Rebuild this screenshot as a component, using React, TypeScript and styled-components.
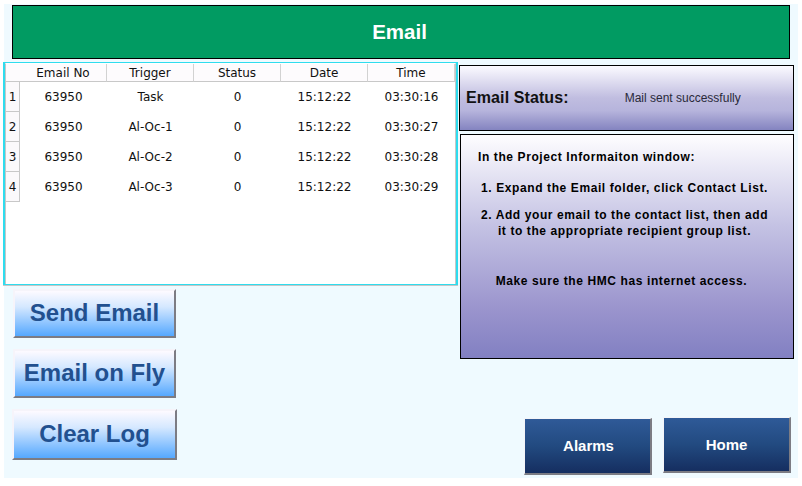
import React from 'react';
import styled, { createGlobalStyle } from 'styled-components';

const GlobalStyle = createGlobalStyle`
  html, body {
    margin: 0;
    padding: 0;
    background: #ffffff;
  }
`;

const Screen = styled.div`
  box-sizing: border-box;
  width: 794px;
  height: 474px;
  margin: 4px 0 0 4px;
  background: #effaff;
  display: flex;
  flex-direction: column;
`;

const TitleBar = styled.div`
  box-sizing: border-box;
  width: 778px;
  height: 54px;
  margin: 1px 0 0 8px;
  padding: 0 3px 1px 0;
  background: #019b62;
  border: 1px solid #000000;
  color: #ffffff;
  font: bold 20.5px 'Liberation Sans', Arial, sans-serif;
  display: flex;
  align-items: center;
  justify-content: center;
`;

const Body = styled.div`
  display: flex;
  margin-top: 3px;
  flex: 1;
`;

const LeftColumn = styled.div`
  width: 455px;
  margin-left: -1px;
  display: flex;
  flex-direction: column;
`;

const TableFrame = styled.div`
  box-sizing: border-box;
  width: 455px;
  height: 223px;
  background: #ffffff;
  border: 1px solid #2fdcee;
  border-left-width: 2px;
  border-right-width: 2px;
  box-shadow: 0 1px 0 #c6c6c6;
`;

const TableInner = styled.div`
  box-sizing: border-box;
  height: 100%;
  border: 1px solid #c6c6c6;
  border-top: 1px solid #ffffff;
  border-bottom: none;
  font: 12px 'DejaVu Sans', sans-serif;
  color: #111111;
`;

const TableGrid = styled.div`
  display: grid;
  grid-template-columns: 14px 87px 87px 87px 87px 87px;
`;

const HeadCell = styled.div`
  box-sizing: border-box;
  height: 18px;
  background: #fdfbfd;
  border-right: 1px solid #d2d2d2;
  border-bottom: 1px solid #c8c8c8;
  display: flex;
  align-items: center;
  justify-content: center;
  &:first-child {
    border-right: none;
  }
`;

const RowHead = styled.div`
  box-sizing: border-box;
  height: 30px;
  background: #fbf9fb;
  border-right: 1px solid #c8c8c8;
  border-bottom: 1px solid #c8c8c8;
  display: flex;
  align-items: center;
  justify-content: center;
`;

const Cell = styled.div`
  height: 30px;
  display: flex;
  align-items: center;
  justify-content: center;
`;

const ActionList = styled.div`
  display: flex;
  flex-direction: column;
  gap: 11px;
  margin: 4px 0 0 10px;
`;

const ActionButton = styled.button<{ $wide?: boolean }>`
  box-sizing: border-box;
  width: ${(p) => (p.$wide ? 165 : 163)}px;
  height: ${(p) => (p.$wide ? 51 : 49)}px;
  margin-left: ${(p) => (p.$wide ? -1 : 0)}px;
  padding: 0 0 2px;
  background: linear-gradient(#fdfaff 0%, #d5e8ff 35%, #55a8ff 100%);
  border: 2px solid #f6f4fa;
  border-right-color: #7c7c84;
  border-bottom-color: #7c7c84;
  color: #22508f;
  font: bold 24px 'Liberation Sans', Arial, sans-serif;
`;

const RightColumn = styled.div`
  width: 335px;
  margin-left: 1px;
  margin-top: 3px;
  display: flex;
  flex-direction: column;
`;

const StatusPanel = styled.div`
  box-sizing: border-box;
  height: 66px;
  background: linear-gradient(#fbfaff 0%, #c0bde0 50%, #b6b4dc 70%, #8484c0 100%);
  border: 1px solid #000000;
  display: flex;
  align-items: center;
  padding: 0 0 1px 6px;
  font-family: 'Liberation Sans', Arial, sans-serif;
  color: #111111;
`;

const StatusLabel = styled.span`
  font-weight: bold;
  font-size: 16px;
  letter-spacing: 0.1px;
`;

const StatusValue = styled.span`
  margin-left: 56px;
  font-size: 12px;
  color: #2a2a3a;
`;

const InfoPanel = styled.div`
  box-sizing: border-box;
  height: 225px;
  width: 334px;
  margin: 3px 0 0 1px;
  background: linear-gradient(#fefdff 0%, #c5c3e4 40%, #9a94cd 78%, #8280c2 100%);
  border: 1px solid #000000;
  padding: 14px 5px 0 0;
  font: bold 12px/16px 'Liberation Sans', Arial, sans-serif;
  letter-spacing: 0.6px;
  color: #000000;
`;

const InfoLine = styled.div<{ $gap?: number; $indent?: number; $pull?: number }>`
  margin-top: ${(p) => p.$gap ?? 0}px;
  text-align: ${(p) => (p.$indent ? 'left' : 'center')};
  padding-left: ${(p) => p.$indent ?? 0}px;
  padding-right: ${(p) => p.$pull ?? 0}px;
`;

const NavRow = styled.div`
  margin-top: auto;
  display: flex;
  align-items: flex-start;
  justify-content: flex-end;
  gap: 11px;
  padding: 0 3px 3px 0;
`;

const NavButton = styled.button<{ $lower?: boolean }>`
  box-sizing: border-box;
  width: 128px;
  height: ${(p) => (p.$lower ? 57 : 56)}px;
  margin-top: ${(p) => (p.$lower ? 1 : 0)}px;
  padding: ${(p) => (p.$lower ? '0 0 2px 2px' : '0')};
  background: linear-gradient(#2f5a98 0%, #224a80 50%, #152e60 100%);
  border: 1px solid #f4f4f8;
  border-right: 2px solid #7c7c84;
  border-bottom: 2px solid #7c7c84;
  color: #ffffff;
  font: bold 15px 'Liberation Sans', Arial, sans-serif;
`;

const columns = ['Email No', 'Trigger', 'Status', 'Date', 'Time'];

const rows = [
  ['63950', 'Task', '0', '15:12:22', '03:30:16'],
  ['63950', 'Al-Oc-1', '0', '15:12:22', '03:30:27'],
  ['63950', 'Al-Oc-2', '0', '15:12:22', '03:30:28'],
  ['63950', 'Al-Oc-3', '0', '15:12:22', '03:30:29'],
];

function App() {
  return (
    <>
      <GlobalStyle />
      <Screen>
        <TitleBar>Email</TitleBar>
        <Body>
          <LeftColumn>
            <TableFrame>
              <TableInner>
                <TableGrid>
                  <HeadCell />
                  {columns.map((c) => (
                    <HeadCell key={c}>{c}</HeadCell>
                  ))}
                  {rows.map((row, i) => (
                    <React.Fragment key={i}>
                      <RowHead>{i + 1}</RowHead>
                      {row.map((v, j) => (
                        <Cell key={j}>{v}</Cell>
                      ))}
                    </React.Fragment>
                  ))}
                </TableGrid>
              </TableInner>
            </TableFrame>
            <ActionList>
              <ActionButton>Send Email</ActionButton>
              <ActionButton>Email on Fly</ActionButton>
              <ActionButton $wide>Clear Log</ActionButton>
            </ActionList>
          </LeftColumn>
          <RightColumn>
            <StatusPanel>
              <StatusLabel>Email Status:</StatusLabel>
              <StatusValue>Mail sent successfully</StatusValue>
            </StatusPanel>
            <InfoPanel>
              <InfoLine $indent={17}>In the Project Informaiton window:</InfoLine>
              <InfoLine $gap={15}>1. Expand the Email folder, click Contact List.</InfoLine>
              <InfoLine $gap={11}>
                2. Add your email to the contact list, then add
                <br />
                it to the appropriate recipient group list.
              </InfoLine>
              <InfoLine $gap={34} $pull={6}>Make sure the HMC has internet access.</InfoLine>
            </InfoPanel>
            <NavRow>
              <NavButton $lower>Alarms</NavButton>
              <NavButton>Home</NavButton>
            </NavRow>
          </RightColumn>
        </Body>
      </Screen>
    </>
  );
}

export default App;
